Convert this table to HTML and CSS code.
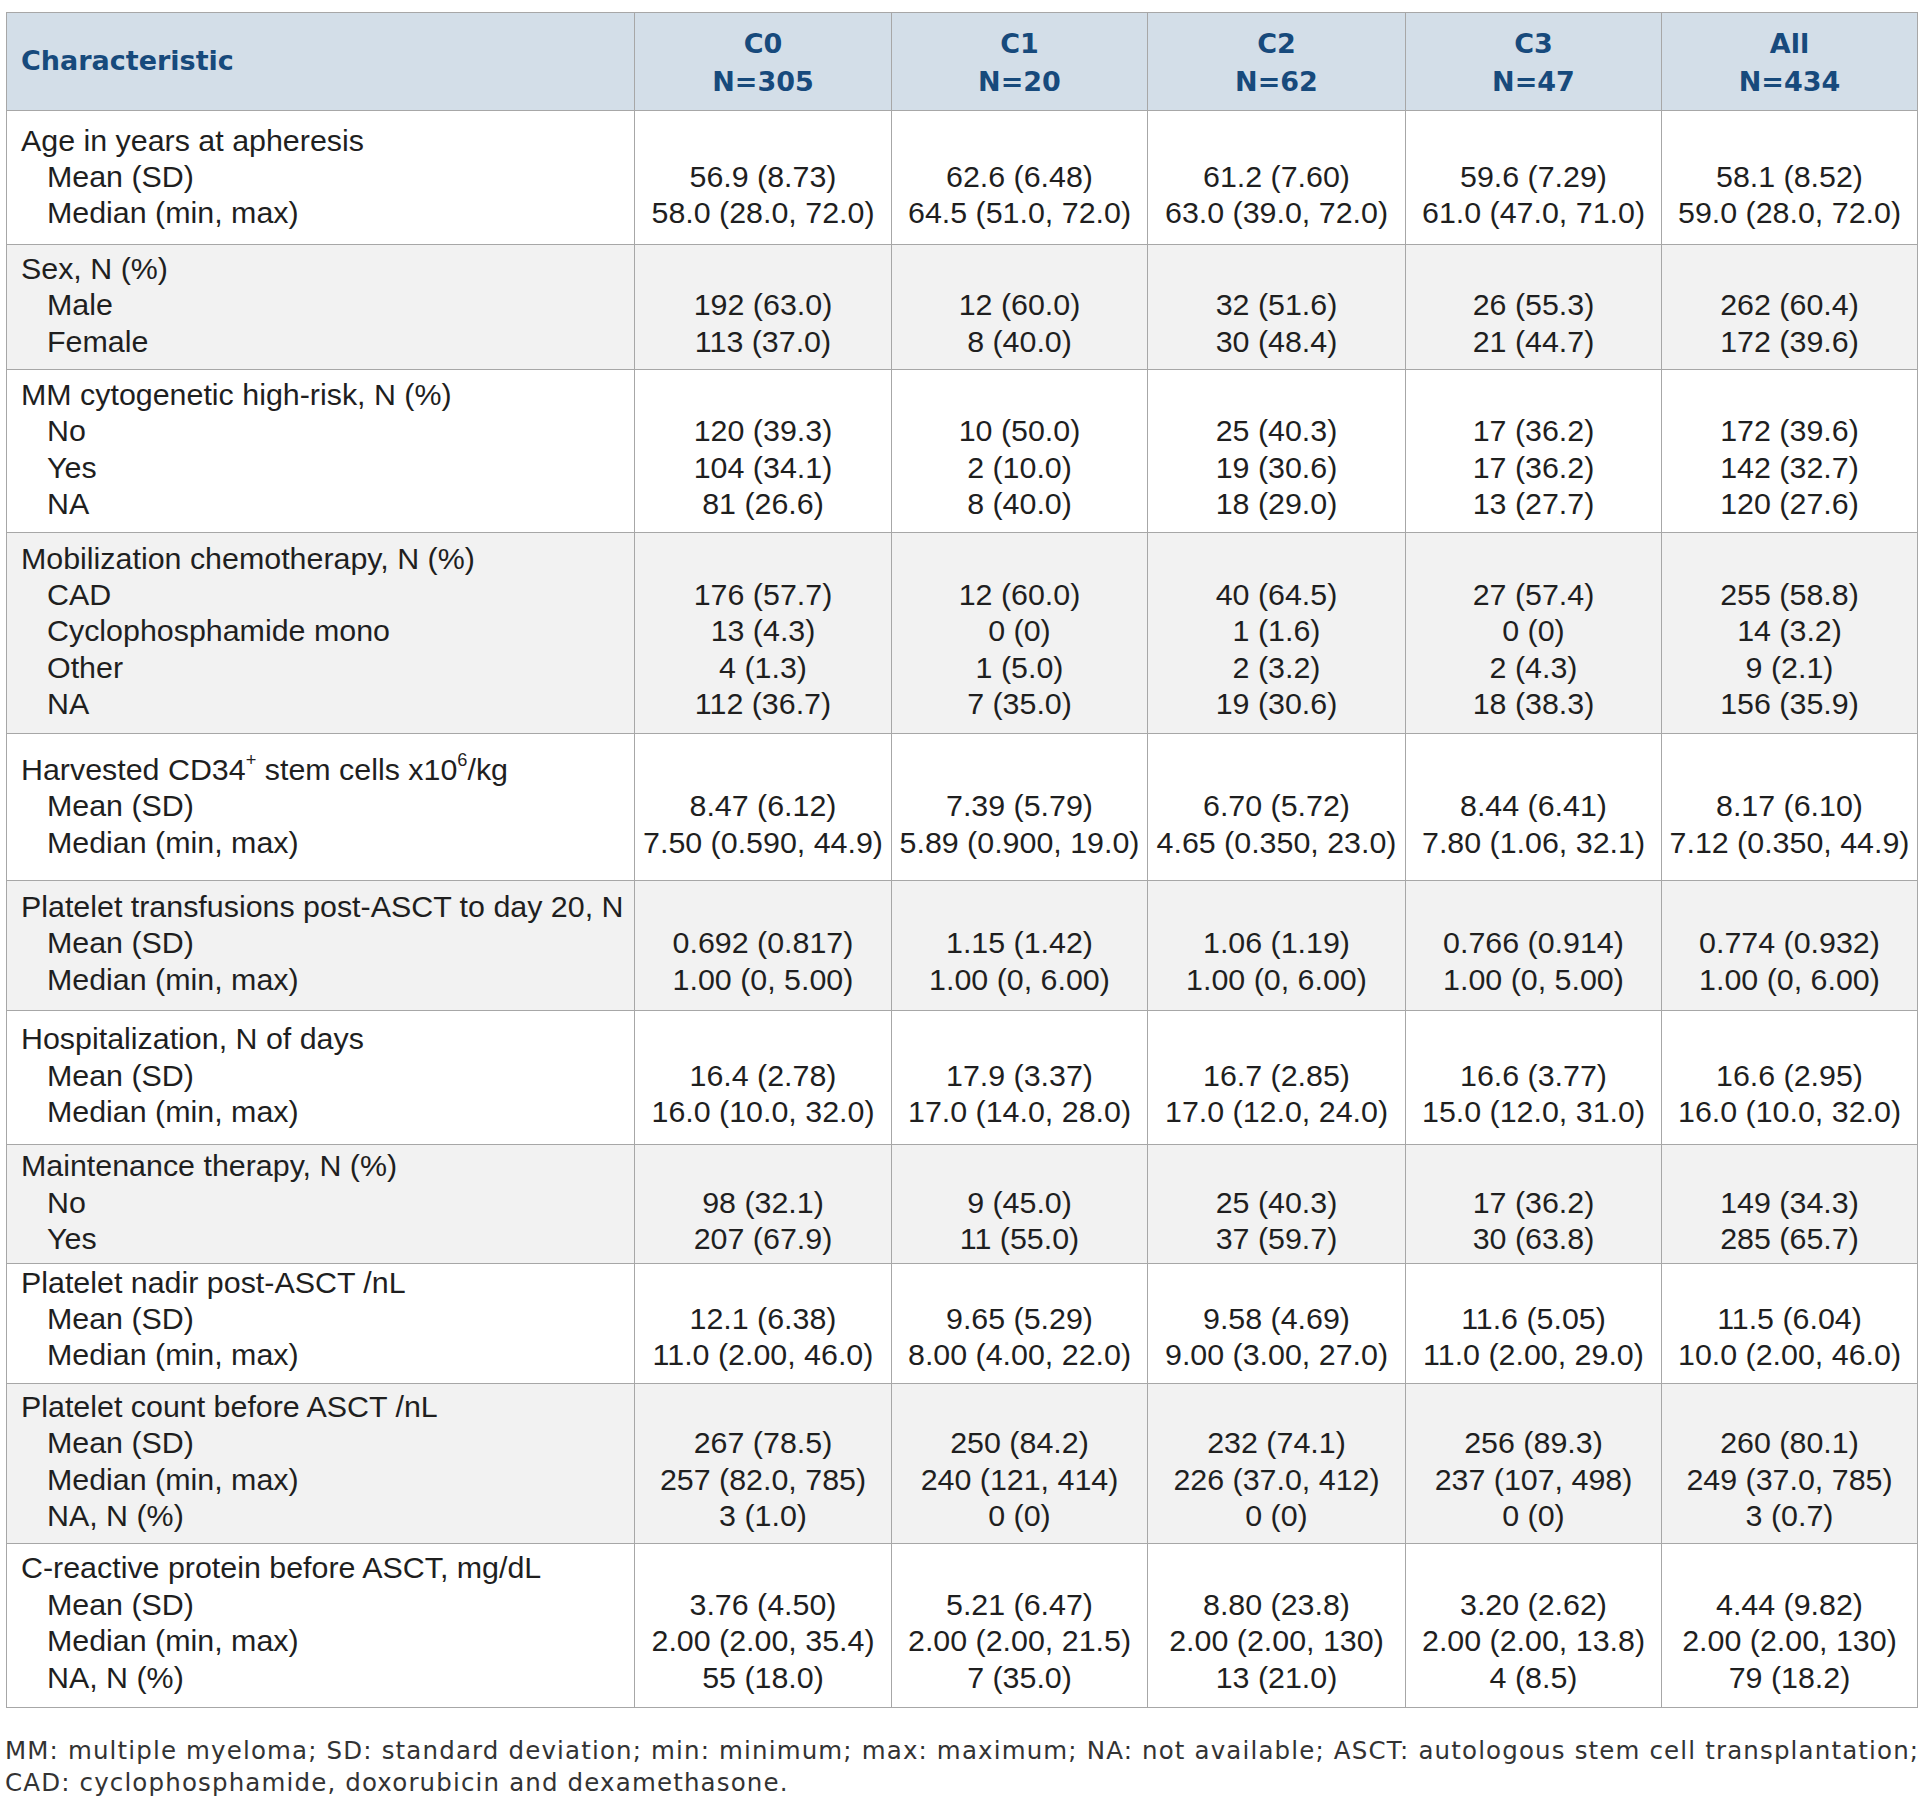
FILE: index.html
```html
<!DOCTYPE html>
<html lang="en">
<head>
<meta charset="utf-8">
<title>Patient characteristics by cluster</title>
<link rel="stylesheet" href="styles.css">
</head>
<body>
<div class="page">
<table class="tbl">
<colgroup>
<col class="w-lbl"><col class="w-257"><col class="w-256"><col class="w-258"><col class="w-256"><col class="w-256">
</colgroup>
<thead>
<tr>
<th class="lbl-h">Characteristic</th>
<th>C0<br>N=305</th>
<th>C1<br>N=20</th>
<th>C2<br>N=62</th>
<th>C3<br>N=47</th>
<th>All<br>N=434</th>
</tr>
</thead>
<tbody>
<tr class="p-age">
<td class="lbl"><div>Age in years at apheresis</div><div class="sub">Mean (SD)</div><div class="sub">Median (min, max)</div></td>
<td class="val"><div>&nbsp;</div><div>56.9 (8.73)</div><div>58.0 (28.0, 72.0)</div></td>
<td class="val"><div>&nbsp;</div><div>62.6 (6.48)</div><div>64.5 (51.0, 72.0)</div></td>
<td class="val"><div>&nbsp;</div><div>61.2 (7.60)</div><div>63.0 (39.0, 72.0)</div></td>
<td class="val"><div>&nbsp;</div><div>59.6 (7.29)</div><div>61.0 (47.0, 71.0)</div></td>
<td class="val"><div>&nbsp;</div><div>58.1 (8.52)</div><div>59.0 (28.0, 72.0)</div></td>
</tr>
<tr class="p-sex">
<td class="lbl"><div>Sex, N (%)</div><div class="sub">Male</div><div class="sub">Female</div></td>
<td class="val"><div>&nbsp;</div><div>192 (63.0)</div><div>113 (37.0)</div></td>
<td class="val"><div>&nbsp;</div><div>12 (60.0)</div><div>8 (40.0)</div></td>
<td class="val"><div>&nbsp;</div><div>32 (51.6)</div><div>30 (48.4)</div></td>
<td class="val"><div>&nbsp;</div><div>26 (55.3)</div><div>21 (44.7)</div></td>
<td class="val"><div>&nbsp;</div><div>262 (60.4)</div><div>172 (39.6)</div></td>
</tr>
<tr class="p-mm">
<td class="lbl"><div>MM cytogenetic high-risk, N (%)</div><div class="sub">No</div><div class="sub">Yes</div><div class="sub">NA</div></td>
<td class="val"><div>&nbsp;</div><div>120 (39.3)</div><div>104 (34.1)</div><div>81 (26.6)</div></td>
<td class="val"><div>&nbsp;</div><div>10 (50.0)</div><div>2 (10.0)</div><div>8 (40.0)</div></td>
<td class="val"><div>&nbsp;</div><div>25 (40.3)</div><div>19 (30.6)</div><div>18 (29.0)</div></td>
<td class="val"><div>&nbsp;</div><div>17 (36.2)</div><div>17 (36.2)</div><div>13 (27.7)</div></td>
<td class="val"><div>&nbsp;</div><div>172 (39.6)</div><div>142 (32.7)</div><div>120 (27.6)</div></td>
</tr>
<tr class="p-mob">
<td class="lbl"><div>Mobilization chemotherapy, N (%)</div><div class="sub">CAD</div><div class="sub">Cyclophosphamide mono</div><div class="sub">Other</div><div class="sub">NA</div></td>
<td class="val"><div>&nbsp;</div><div>176 (57.7)</div><div>13 (4.3)</div><div>4 (1.3)</div><div>112 (36.7)</div></td>
<td class="val"><div>&nbsp;</div><div>12 (60.0)</div><div>0 (0)</div><div>1 (5.0)</div><div>7 (35.0)</div></td>
<td class="val"><div>&nbsp;</div><div>40 (64.5)</div><div>1 (1.6)</div><div>2 (3.2)</div><div>19 (30.6)</div></td>
<td class="val"><div>&nbsp;</div><div>27 (57.4)</div><div>0 (0)</div><div>2 (4.3)</div><div>18 (38.3)</div></td>
<td class="val"><div>&nbsp;</div><div>255 (58.8)</div><div>14 (3.2)</div><div>9 (2.1)</div><div>156 (35.9)</div></td>
</tr>
<tr class="p-harv">
<td class="lbl"><div>Harvested CD34<sup>+</sup> stem cells x10<sup>6</sup>/kg</div><div class="sub">Mean (SD)</div><div class="sub">Median (min, max)</div></td>
<td class="val"><div>&nbsp;</div><div>8.47 (6.12)</div><div>7.50 (0.590, 44.9)</div></td>
<td class="val"><div>&nbsp;</div><div>7.39 (5.79)</div><div>5.89 (0.900, 19.0)</div></td>
<td class="val"><div>&nbsp;</div><div>6.70 (5.72)</div><div>4.65 (0.350, 23.0)</div></td>
<td class="val"><div>&nbsp;</div><div>8.44 (6.41)</div><div>7.80 (1.06, 32.1)</div></td>
<td class="val"><div>&nbsp;</div><div>8.17 (6.10)</div><div>7.12 (0.350, 44.9)</div></td>
</tr>
<tr class="p-tra">
<td class="lbl"><div>Platelet transfusions post-ASCT to day 20, N</div><div class="sub">Mean (SD)</div><div class="sub">Median (min, max)</div></td>
<td class="val"><div>&nbsp;</div><div>0.692 (0.817)</div><div>1.00 (0, 5.00)</div></td>
<td class="val"><div>&nbsp;</div><div>1.15 (1.42)</div><div>1.00 (0, 6.00)</div></td>
<td class="val"><div>&nbsp;</div><div>1.06 (1.19)</div><div>1.00 (0, 6.00)</div></td>
<td class="val"><div>&nbsp;</div><div>0.766 (0.914)</div><div>1.00 (0, 5.00)</div></td>
<td class="val"><div>&nbsp;</div><div>0.774 (0.932)</div><div>1.00 (0, 6.00)</div></td>
</tr>
<tr class="p-hosp">
<td class="lbl"><div>Hospitalization, N of days</div><div class="sub">Mean (SD)</div><div class="sub">Median (min, max)</div></td>
<td class="val"><div>&nbsp;</div><div>16.4 (2.78)</div><div>16.0 (10.0, 32.0)</div></td>
<td class="val"><div>&nbsp;</div><div>17.9 (3.37)</div><div>17.0 (14.0, 28.0)</div></td>
<td class="val"><div>&nbsp;</div><div>16.7 (2.85)</div><div>17.0 (12.0, 24.0)</div></td>
<td class="val"><div>&nbsp;</div><div>16.6 (3.77)</div><div>15.0 (12.0, 31.0)</div></td>
<td class="val"><div>&nbsp;</div><div>16.6 (2.95)</div><div>16.0 (10.0, 32.0)</div></td>
</tr>
<tr class="p-main">
<td class="lbl"><div>Maintenance therapy, N (%)</div><div class="sub">No</div><div class="sub">Yes</div></td>
<td class="val"><div>&nbsp;</div><div>98 (32.1)</div><div>207 (67.9)</div></td>
<td class="val"><div>&nbsp;</div><div>9 (45.0)</div><div>11 (55.0)</div></td>
<td class="val"><div>&nbsp;</div><div>25 (40.3)</div><div>37 (59.7)</div></td>
<td class="val"><div>&nbsp;</div><div>17 (36.2)</div><div>30 (63.8)</div></td>
<td class="val"><div>&nbsp;</div><div>149 (34.3)</div><div>285 (65.7)</div></td>
</tr>
<tr class="p-nadir">
<td class="lbl"><div>Platelet nadir post-ASCT /nL</div><div class="sub">Mean (SD)</div><div class="sub">Median (min, max)</div></td>
<td class="val"><div>&nbsp;</div><div>12.1 (6.38)</div><div>11.0 (2.00, 46.0)</div></td>
<td class="val"><div>&nbsp;</div><div>9.65 (5.29)</div><div>8.00 (4.00, 22.0)</div></td>
<td class="val"><div>&nbsp;</div><div>9.58 (4.69)</div><div>9.00 (3.00, 27.0)</div></td>
<td class="val"><div>&nbsp;</div><div>11.6 (5.05)</div><div>11.0 (2.00, 29.0)</div></td>
<td class="val"><div>&nbsp;</div><div>11.5 (6.04)</div><div>10.0 (2.00, 46.0)</div></td>
</tr>
<tr class="p-count">
<td class="lbl"><div>Platelet count before ASCT /nL</div><div class="sub">Mean (SD)</div><div class="sub">Median (min, max)</div><div class="sub">NA, N (%)</div></td>
<td class="val"><div>&nbsp;</div><div>267 (78.5)</div><div>257 (82.0, 785)</div><div>3 (1.0)</div></td>
<td class="val"><div>&nbsp;</div><div>250 (84.2)</div><div>240 (121, 414)</div><div>0 (0)</div></td>
<td class="val"><div>&nbsp;</div><div>232 (74.1)</div><div>226 (37.0, 412)</div><div>0 (0)</div></td>
<td class="val"><div>&nbsp;</div><div>256 (89.3)</div><div>237 (107, 498)</div><div>0 (0)</div></td>
<td class="val"><div>&nbsp;</div><div>260 (80.1)</div><div>249 (37.0, 785)</div><div>3 (0.7)</div></td>
</tr>
<tr class="p-crp">
<td class="lbl"><div>C-reactive protein before ASCT, mg/dL</div><div class="sub">Mean (SD)</div><div class="sub">Median (min, max)</div><div class="sub">NA, N (%)</div></td>
<td class="val"><div>&nbsp;</div><div>3.76 (4.50)</div><div>2.00 (2.00, 35.4)</div><div>55 (18.0)</div></td>
<td class="val"><div>&nbsp;</div><div>5.21 (6.47)</div><div>2.00 (2.00, 21.5)</div><div>7 (35.0)</div></td>
<td class="val"><div>&nbsp;</div><div>8.80 (23.8)</div><div>2.00 (2.00, 130)</div><div>13 (21.0)</div></td>
<td class="val"><div>&nbsp;</div><div>3.20 (2.62)</div><div>2.00 (2.00, 13.8)</div><div>4 (8.5)</div></td>
<td class="val"><div>&nbsp;</div><div>4.44 (9.82)</div><div>2.00 (2.00, 130)</div><div>79 (18.2)</div></td>
</tr>
</tbody>
</table>
<p class="note">MM: multiple myeloma; SD: standard deviation; min: minimum; max: maximum; NA: not available; ASCT: autologous stem cell transplantation;<br>CAD: cyclophosphamide, doxorubicin and dexamethasone.</p>
</div>
</body>
</html>
```

FILE: styles.css
```css
html, body {
  margin: 0;
  padding: 0;
  background: #ffffff;
}

body {
  font-family: "Liberation Sans", Arial, sans-serif;
  color: #1f1f1f;
}

.page {
  padding: 12px 0 0 6px;
}

.tbl {
  border-collapse: collapse;
  table-layout: fixed;
  width: 1911px;
  font-size: 30.4px;
  line-height: 36.4px;
}

.w-lbl { width: 628px; }
.w-257 { width: 257px; }
.w-256 { width: 256px; }
.w-258 { width: 258px; }

.tbl th,
.tbl td {
  border: 1px solid #a7a7a7;
}

.tbl thead th {
  background: #d3dee8;
  color: #174a7c;
  font-family: "DejaVu Sans", sans-serif;
  font-weight: bold;
  font-size: 27px;
  line-height: 38.3px;
  padding: 12px 4px 8px;
  text-align: center;
  vertical-align: middle;
}

.tbl thead th.lbl-h {
  text-align: left;
  padding-left: 14px;
  padding-bottom: 12px;
}

.tbl td {
  vertical-align: top;
  padding: 0 4px;
  white-space: nowrap;
}

.tbl td.lbl {
  padding-left: 14px;
}

.tbl td.val {
  text-align: center;
}

.sub {
  padding-left: 26px;
}

.tbl tbody tr:nth-child(even) td {
  background: #f2f2f2;
}

sup {
  font-size: 0.6em;
  line-height: 0;
  vertical-align: 0.75em;
}

.p-age td   { padding-top: 11px; padding-bottom: 13px; }
.p-sex td   { padding-top: 5px;  padding-bottom: 10px; }
.p-mm td    { padding-top: 6px;  padding-bottom: 10px; }
.p-mob td   { padding-top: 7px;  padding-bottom: 11px; }
.p-harv td  { padding-top: 17px; padding-bottom: 20px; }
.p-tra td   { padding-top: 7px;  padding-bottom: 13px; }
.p-hosp td  { padding-top: 9px;  padding-bottom: 15px; }
.p-main td  { padding-top: 2px;  padding-bottom: 6px; }
.p-nadir td { padding-top: 0;    padding-bottom: 10px; }
.p-count td { padding-top: 4px;  padding-bottom: 10px; }
.p-crp td   { padding-top: 5px;  padding-bottom: 12px; }

.note {
  margin: 27px 0 0 -1px;
  font-family: "DejaVu Sans", sans-serif;
  font-size: 24.5px;
  line-height: 32px;
  letter-spacing: 1.15px;
  color: #333333;
  white-space: nowrap;
}
```
